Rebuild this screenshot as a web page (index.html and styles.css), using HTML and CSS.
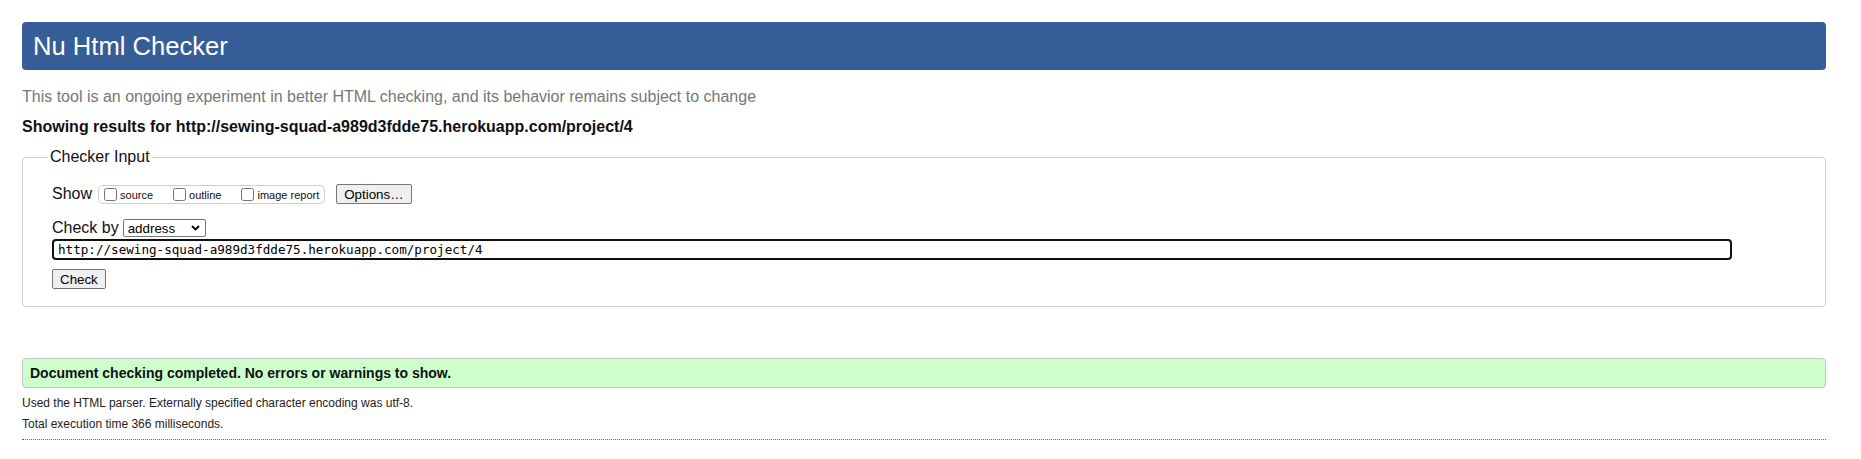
FILE: index.html
```html
<!DOCTYPE html>
<html lang="en">
<head>
<meta charset="utf-8">
<title>Nu Html Checker</title>
<link rel="stylesheet" href="styles.css">
</head>
<body>
<h1 class="title">Nu Html Checker</h1>
<p class="tagline">This tool is an ongoing experiment in better HTML checking, and its behavior remains subject to change</p>
<p class="results-for">Showing results for http://sewing-squad-a989d3fdde75.herokuapp.com/project/4</p>
<form class="checker-form">
  <fieldset class="checker-input">
    <legend class="legend">Checker Input</legend>
    <div class="row row-show">
      <span class="label">Show</span>
      <span class="check-group">
        <label class="opt"><input type="checkbox" class="cb"><span>source</span></label>
        <label class="opt"><input type="checkbox" class="cb"><span>outline</span></label>
        <label class="opt opt-last"><input type="checkbox" class="cb"><span>image report</span></label>
      </span>
      <button type="button" class="btn btn-options">Options…</button>
    </div>
    <div class="row row-by">
      <span class="label">Check by</span>
      <span class="select-wrap">
        <select class="select"><option>address</option></select>
        <svg class="chev" width="9" height="6" viewBox="0 0 9 6"><path d="M1 1 L4.5 4.5 L8 1" fill="none" stroke="#000" stroke-width="1.8"/></svg>
      </span>
    </div>
    <div class="row row-url">
      <input type="text" class="url" value="http://sewing-squad-a989d3fdde75.herokuapp.com/project/4">
    </div>
    <div class="row row-submit">
      <button type="button" class="btn btn-check">Check</button>
    </div>
  </fieldset>
</form>
<div class="success">Document checking completed. No errors or warnings to show.</div>
<p class="details">Used the HTML parser. Externally specified character encoding was utf-8.</p>
<p class="details">Total execution time 366 milliseconds.</p>
<hr class="rule">
</body>
</html>
```
FILE: styles.css
```css
html, body {
  background: #fff;
}
body {
  margin: 0;
  padding: 22px 35px 0 22px;
  font-family: "Liberation Sans", Arial, sans-serif;
  color: #000;
}
.title {
  margin: 0;
  height: 48px;
  line-height: 48px;
  padding: 0 11px;
  background: #365d95;
  color: #fff;
  font-size: 25.6px;
  font-weight: normal;
  border-radius: 4px;
}
.tagline {
  margin: 17px 0 0;
  font-size: 16px;
  line-height: 20px;
  color: #777;
}
.results-for {
  margin: 10px 0 0;
  font-size: 16px;
  line-height: 20px;
  font-weight: bold;
  color: #111;
}
.checker-form {
  margin: 11px 0 0;
}
.checker-input {
  margin: 0;
  padding: 0 29px 17px;
  border: 1px solid #cfcfcf;
  border-radius: 4px;
  min-width: 0;
}
.legend {
  font-size: 16px;
  line-height: 18px;
  padding: 0 2px;
  margin-left: -4px;
  color: #111;
}
.row {
  display: flex;
  align-items: center;
}
.label {
  font-size: 16px;
  line-height: 18px;
  color: #111;
}
.row-show {
  margin-top: 18px;
  height: 20px;
}
.check-group {
  display: inline-flex;
  align-items: center;
  height: 17px;
  margin-left: 6px;
  padding: 0 5px 0 1px;
  border: 1px solid #cfcfcf;
  border-radius: 5px;
}
.opt {
  display: inline-flex;
  align-items: center;
  font-size: 11px;
  line-height: 17px;
  color: #111;
  margin-right: 16px;
}
.opt span {
  padding-top: 2px;
}
.opt-last {
  margin-right: 0;
}
.cb {
  width: 13px;
  height: 13px;
  margin: 0 3px 0 4px;
}
.btn {
  font-family: "Liberation Sans", Arial, sans-serif;
  font-size: 13.33px;
  height: 20px;
  padding: 0 7px;
  background: #efefef;
  border: 1px solid #767676;
  border-radius: 2px;
  color: #000;
}
.btn-options {
  margin-left: 11px;
}
.row-by {
  margin-top: 15px;
  height: 18px;
}
.select-wrap {
  display: inline-flex;
  align-items: center;
  margin-left: 4px;
}
.select {
  appearance: none;
  -webkit-appearance: none;
  width: 83px;
  height: 18px;
  padding: 0 0 0 4px;
  font-family: "Liberation Sans", Arial, sans-serif;
  font-size: 13.33px;
  border: 1px solid #767676;
  border-radius: 2px;
  background: #fff;
  color: #000;
}
.chev {
  margin-left: -15px;
  pointer-events: none;
}
.row-url {
  margin-top: 2px;
}
.url {
  flex: 1;
  margin-right: 64px;
  height: 21px;
  box-sizing: border-box;
  padding: 0 4px;
  border: 2px solid #101010;
  border-radius: 4px;
  font-family: "DejaVu Sans Mono", "Liberation Mono", monospace;
  font-size: 12.6px;
  color: #000;
  outline: none;
}
.row-submit {
  margin-top: 9px;
}
.success {
  margin-top: 51px;
  height: 28px;
  line-height: 28px;
  padding: 0 7px;
  background: #ccffcc;
  border: 1px solid #c4c4c4;
  border-radius: 4px;
  font-size: 14px;
  font-weight: bold;
  color: #111;
}
.details {
  margin: 0;
  font-size: 12px;
  line-height: 20.5px;
  color: #222;
}
.success + .details {
  margin-top: 5px;
}
.rule {
  margin: 5px 0 0;
  border: 0;
  border-top: 1px dotted #666;
  height: 0;
}
```
